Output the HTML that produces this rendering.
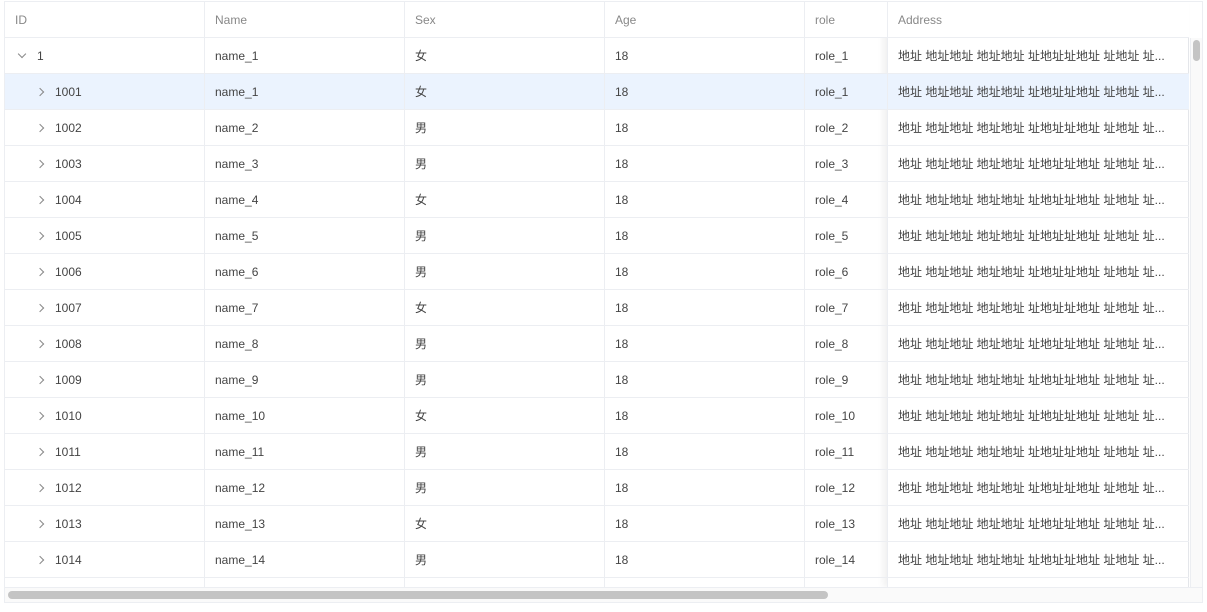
<!DOCTYPE html>
<html><head><meta charset="utf-8"><style>
*{box-sizing:border-box;margin:0;padding:0}
body{width:1207px;height:612px;background:#fff;font-family:"Liberation Sans","Noto Sans CJK SC",sans-serif;font-size:12px;color:#444;position:relative;overflow:hidden}
.wrap{position:absolute;left:4px;top:1px;width:1199px;height:602px;border:1px solid #eceef2;overflow:hidden}
.row{position:absolute;left:0;height:36px;border-bottom:1px solid #eceef2;width:1184px}
.c{position:absolute;top:0;height:36px;line-height:37px;padding-left:10px;border-right:1px solid #eceef2;white-space:nowrap;overflow:hidden}
.h .c{color:#888}
.hl{background:#ebf3fe}
.arr{display:inline-block;width:6px;height:6px;border-right:1px solid #888;border-bottom:1px solid #888;transform:rotate(-45deg);margin-left:2px;margin-right:12px;vertical-align:1px}
.dn{transform:rotate(45deg);vertical-align:3px;margin-left:4px}
.fix{position:absolute;left:882px;top:0;width:302px;height:585px;box-shadow:-4px 0 6px rgba(0,0,0,0.06);border-right:1px solid #e4e6ea}
</style></head><body>
<div class="wrap">
<div class="fix"></div>
<div id="rows"></div>
<div style="position:absolute;left:1185px;top:36px;width:13px;height:550px;background:#fafafa;border-left:1px solid #eceef2"></div>
<div style="position:absolute;left:1188px;top:38px;width:7px;height:21px;background:#c4c4c4;border-radius:4px"></div>
<div style="position:absolute;left:0;top:585px;width:1199px;height:16px;background:#fafafa;border-top:1px solid #eceef2"></div>
<div style="position:absolute;left:3px;top:589px;width:820px;height:8px;background:#c4c4c4;border-radius:4px"></div>
</div>
<script>
var rows=document.getElementById('rows');
var sex=['女','女','男','男','女','男','男','女','男','男','女','男','男','女','男'];
var addr='地址 地址地址 地址地址 址地址址地址 址地址 址...';
function cells(a,b,c,d,e,f){
return '<div class="c" style="left:0;width:200px">'+a+'</div><div class="c" style="left:200px;width:200px">'+b+'</div><div class="c" style="left:400px;width:200px">'+c+'</div><div class="c" style="left:600px;width:200px">'+d+'</div><div class="c" style="left:800px;width:83px">'+e+'</div><div class="c" style="left:883px;width:301px;border-right:none">'+f+'</div>';}
var h='<div class="row h" style="top:0;background:#fff">'+cells('ID','Name','Sex','Age','role','Address')+'</div>';
h+='<div class="row" style="top:36px">'+cells('<span class="arr dn"></span>1','name_1','女','18','role_1',addr)+'</div>';
for(var i=1;i<=14;i++){
var id=1000+i;
h+='<div class="row'+(i==1?' hl':'')+'" style="top:'+(36+36*i)+'px">'+cells('<span style="padding-left:20px"></span><span class="arr"></span>'+id,'name_'+i,sex[i],'18','role_'+i,addr)+'</div>';}
h+='<div class="row" style="top:576px;height:9px;border:none">'+cells('','','','','','').replace(/height:36px/g,'')+'</div>';
rows.innerHTML=h;
</script>
</body></html>
